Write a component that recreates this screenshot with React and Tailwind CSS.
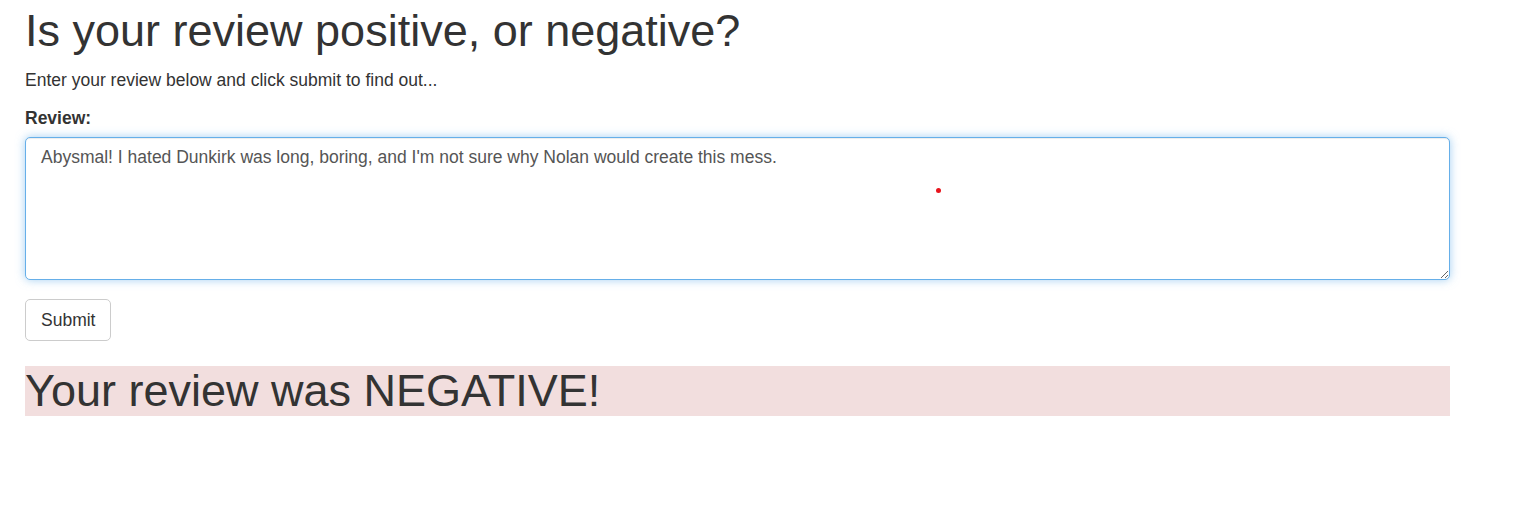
export default function App() {
  return (
    <div className="relative min-h-[507px] bg-white font-['Liberation_Sans',Arial,sans-serif] text-[17.5px] leading-[25px] text-[#333]">
      <div className="w-[1425px] ml-[25px] pt-[6px]">
        <h1 className="text-[45px] leading-[49.5px] font-normal mb-[12.5px]">
          Is your review positive, or negative?
        </h1>
        <p className="mb-[12.5px]">Enter your review below and click submit to find out...</p>

        <form onSubmit={(e) => e.preventDefault()}>
          <div className="mb-[18.75px]">
            <label htmlFor="review" className="block font-bold mb-[6.25px]">
              Review:
            </label>
            <textarea
              id="review"
              defaultValue="Abysmal! I hated Dunkirk was long, boring, and I'm not sure why Nolan would create this mess."
              className="block w-full h-[143.5px] px-[15px] py-[7.5px] text-[17.5px] leading-[25px] text-[#555] bg-white border border-[#66afe9] rounded-[5px] outline-none shadow-[inset_0_1px_1px_rgba(0,0,0,0.075),0_0_10px_rgba(102,175,233,0.6)]"
            />
          </div>

          <button
            type="submit"
            className="h-[42px] px-[15px] bg-white border border-[#ccc] rounded-[5px] text-[17.5px] leading-[25px] text-[#333]"
          >
            Submit
          </button>
        </form>

        <div className="mt-[25px] bg-[#f2dede]">
          <h1 className="text-[45px] leading-[49.5px] font-normal">Your review was NEGATIVE!</h1>
        </div>
      </div>

      <span className="absolute left-[936px] top-[188px] w-[5px] h-[5px] rounded-full bg-[#e8141c]" />
    </div>
  );
}
